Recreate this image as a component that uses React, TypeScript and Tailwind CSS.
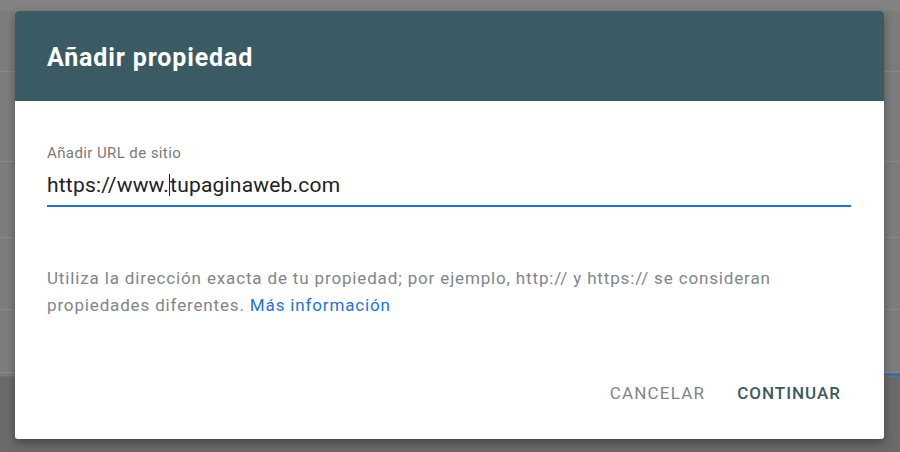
import React from "react";

const font = { fontFamily: "Roboto, 'Liberation Sans', Arial, sans-serif" };

const rows = [61, 90, 76, 72, 63];

const Backdrop = () => (
    <div className="flex flex-col w-full h-full bg-[#7c7c7c]">
        <div className="h-[11px] bg-[#828282]"></div>
        {rows.map((h, key) => (
            <div key={key} className="border-b border-[#8a8a8a]" style={{ height: h }}></div>
        ))}
        <div className="h-[3px] flex justify-end">
            <div className="w-[16px] bg-[#3d6f9a]"></div>
        </div>
        <div className="flex-1 border-t border-[#707070] bg-[#6a6a6a]"></div>
    </div>
);

const App = () => {
    return (
        <div className="relative w-[900px] h-[452px] overflow-hidden bg-[#7c7c7c]" style={font}>
            <Backdrop />
            <div className="absolute left-[15px] top-[11px] w-[869px] h-[428px] bg-white rounded-[3px] shadow-[0_4px_10px_rgba(0,0,0,0.35)] flex flex-col overflow-hidden">
                <div className="h-[90px] bg-[#3a5a64] px-[32px] flex items-center">
                    <h1 className="text-white font-bold text-[25px] tracking-[0.85px] leading-none pt-[2px]">Añadir propiedad</h1>
                </div>
                <div className="flex flex-col px-[32px] pr-[33px] flex-1">
                    <label className="mt-[44px] text-[15px] tracking-[0.4px] leading-[16px] text-[#7a7a7a]">Añadir URL de sitio</label>
                    <div className="mt-[10px] border-b-2 border-[#1a73e8] pb-[6px]">
                        <div className="text-[21px] tracking-[0.2px] leading-[28px] text-[#202124] flex items-center">
                            <span>https://www.</span>
                            <span className="w-px h-[22px] bg-[#202124]"></span>
                            <span>tupaginaweb.com</span>
                        </div>
                    </div>
                    <div className="mt-[58px] text-[17px] tracking-[0.85px] leading-[27px] text-[#80868b]">
                        <div>Utiliza la dirección exacta de tu propiedad; por ejemplo, http:// y https:// se consideran</div>
                        <div>
                            propiedades diferentes. <span className="text-[#1a73e8]">Más información</span>
                        </div>
                    </div>
                    <div className="mt-auto mb-[33px] flex justify-end items-center gap-[32px] pr-[10px]">
                        <button className="text-[17px] uppercase text-[#80868b] tracking-[1.2px]">Cancelar</button>
                        <button className="text-[17px] uppercase font-medium text-[#3a5a64] tracking-[1px]">Continuar</button>
                    </div>
                </div>
            </div>
        </div>
    );
};

export default App;
